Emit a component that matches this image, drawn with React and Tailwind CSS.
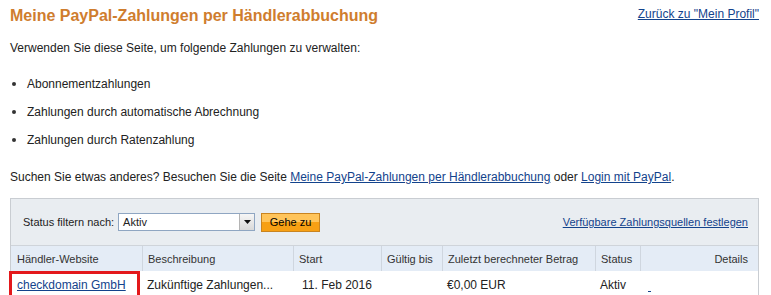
const link = "text-[#13438c] underline";

function Select() {
  return (
    <div className="flex h-[18px] w-[137px] items-stretch border border-[#8fa6c2] bg-white">
      <span className="flex-1 pl-[4px] leading-[16px]">Aktiv</span>
      <span className="flex w-[15px] items-center justify-center border-l border-[#b4b4b4] bg-gradient-to-b from-[#f6f6f6] to-[#d9d9d9]">
        <svg width="7" height="4" viewBox="0 0 7 4">
          <path d="M0 0h7L3.5 4z" fill="#111" />
        </svg>
      </span>
    </div>
  );
}

const cols = "grid grid-cols-[131px_151px_88px_61px_153px_45px_1fr]";

export default function App() {
  return (
    <div className="h-[295px] w-[771px] overflow-hidden bg-white text-[12px] leading-[16px] text-[#222]" style={{ fontFamily: '"Liberation Sans", Arial, sans-serif' }}>
      <div className="flex items-start justify-between pl-[10px] pr-[12px] pt-[5px]">
        <h1 className="text-[16px] font-bold leading-[22px] text-[#cf7d2e]">
          Meine PayPal-Zahlungen per Händlerabbuchung
        </h1>
        <a className={`${link} mt-[1px]`}>Zurück zu "Mein Profil"</a>
      </div>

      <p className="ml-[10px] mt-[13px]">Verwenden Sie diese Seite, um folgende Zahlungen zu verwalten:</p>

      <ul className="ml-[10px] mt-[20px] flex flex-col gap-[12px]">
        {["Abonnementzahlungen", "Zahlungen durch automatische Abrechnung", "Zahlungen durch Ratenzahlung"].map((t) => (
          <li key={t} className="flex items-center">
            <span className="ml-[2px] mr-[11px] h-[4px] w-[4px] rounded-full bg-[#333]" />
            {t}
          </li>
        ))}
      </ul>

      <p className="ml-[10px] mt-[21px]">
        Suchen Sie etwas anderes? Besuchen Sie die Seite{" "}
        <a className={link}>Meine PayPal-Zahlungen per Händlerabbuchung</a> oder{" "}
        <a className={link}>Login mit PayPal</a>.
      </p>

      <div className="relative ml-[10px] mt-[13px] w-[749px] border border-[#c9cdd2] bg-[#e9edf1]">
        <div className="flex h-[46px] items-center pl-[12px] pr-[10px] text-[11px]">
          <span className="mr-[4px]">Status filtern nach:</span>
          <Select />
          <button className="ml-[6px] h-[19px] w-[59px] border border-[#c98420] bg-gradient-to-b from-[#ffc45a] from-50% to-[#f7a014] to-50% text-[11px] leading-[16px] text-black">
            Gehe zu
          </button>
          <a className={`${link} ml-auto`}>Verfügbare Zahlungsquellen festlegen</a>
        </div>

        <div className={`${cols} h-[26px] items-center border-t border-[#cfd4da] bg-[#e4ecf6] text-[11px] text-[#333]`}>
          <span className="pl-[6px]">Händler-Website</span>
          <span className="flex h-full items-center border-l border-[#cfd6df] pl-[5px]">Beschreibung</span>
          <span className="flex h-full items-center border-l border-[#cfd6df] pl-[5px]">Start</span>
          <span className="flex h-full items-center border-l border-[#cfd6df] pl-[5px]">Gültig bis</span>
          <span className="flex h-full items-center border-l border-[#cfd6df] pl-[5px]">Zuletzt berechneter Betrag</span>
          <span className="flex h-full items-center border-l border-[#cfd6df] pl-[5px]">Status</span>
          <span className="flex h-full items-center justify-end border-l border-[#cfd6df] pr-[10px]">Details</span>
        </div>

        <div className={`${cols} h-[30px] bg-white pt-[6px]`}>
          <span className="pl-[6px]">
            <a className={link}>checkdomain GmbH</a>
          </span>
          <span className="pl-[5px]">Zukünftige Zahlungen...</span>
          <span className="pl-[9px]">11. Feb 2016</span>
          <span />
          <span className="pl-[5px]">€0,00 EUR</span>
          <span className="pl-[5px]">Aktiv</span>
          <span className="pl-[8px] pt-[14px]">
            <span className="block h-px w-[3px] bg-[#13438c]" />
          </span>
        </div>

        <div className="absolute left-[-2px] top-[72px] h-[30px] w-[131px] border-[3px] border-[#e3181b]" />
      </div>
    </div>
  );
}
